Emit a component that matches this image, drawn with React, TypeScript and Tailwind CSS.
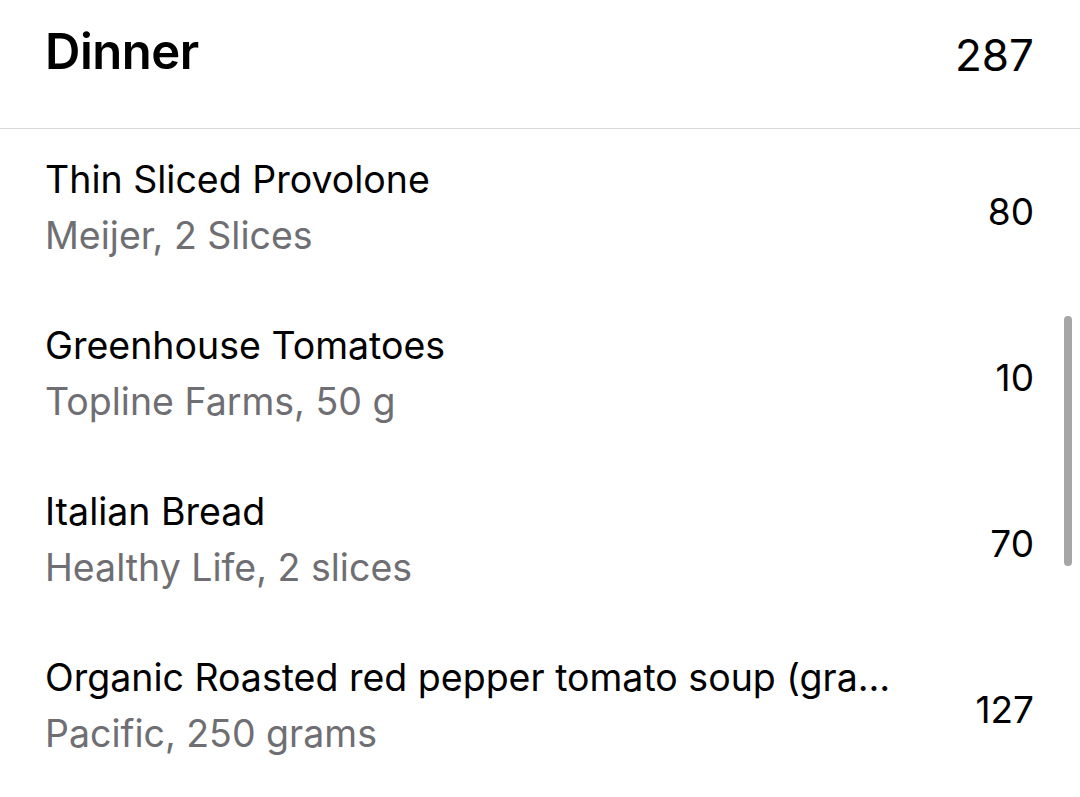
const items = [
  { name: "Thin Sliced Provolone", detail: "Meijer, 2 Slices", cal: 80 },
  { name: "Greenhouse Tomatoes", detail: "Topline Farms, 50 g", cal: 10 },
  { name: "Italian Bread", detail: "Healthy Life, 2 slices", cal: 70 },
  { name: "Organic Roasted red pepper tomato soup (gra…", detail: "Pacific, 250 grams", cal: 127 },
]

export default function App() {
  return (
    <div className="relative w-[1080px] h-[797px] overflow-hidden bg-white text-black font-['Inter',sans-serif]">
      {/* header */}
      <div className="h-[128px] flex items-center justify-between pl-[45px] pr-[46px] pb-[24px]">
        <h1 className="text-[49px] font-semibold tracking-[-0.5px]">Dinner</h1>
        <span className="text-[44px] mt-[6px]">287</span>
      </div>
      <div className="h-px bg-[#d8d8d8]" />

      {/* entries */}
      <div className="flex flex-col">
        {items.map((item) => (
          <div key={item.name} className="h-[166px] flex items-center pl-[45px] pr-[46px]">
            <div className="flex-1 min-w-0 pr-[60px] mb-[8px]">
              <div className="truncate text-[37.5px] leading-[56px]">{item.name}</div>
              <div className="truncate text-[37.5px] leading-[56px] text-[#6e6e73]">{item.detail}</div>
            </div>
            <span className="text-[37px]">{item.cal}</span>
          </div>
        ))}
      </div>

      {/* scroll indicator */}
      <div className="absolute left-[1064px] top-[316px] w-[8px] h-[250px] rounded-full bg-[#a6a6a6]" />
    </div>
  )
}
